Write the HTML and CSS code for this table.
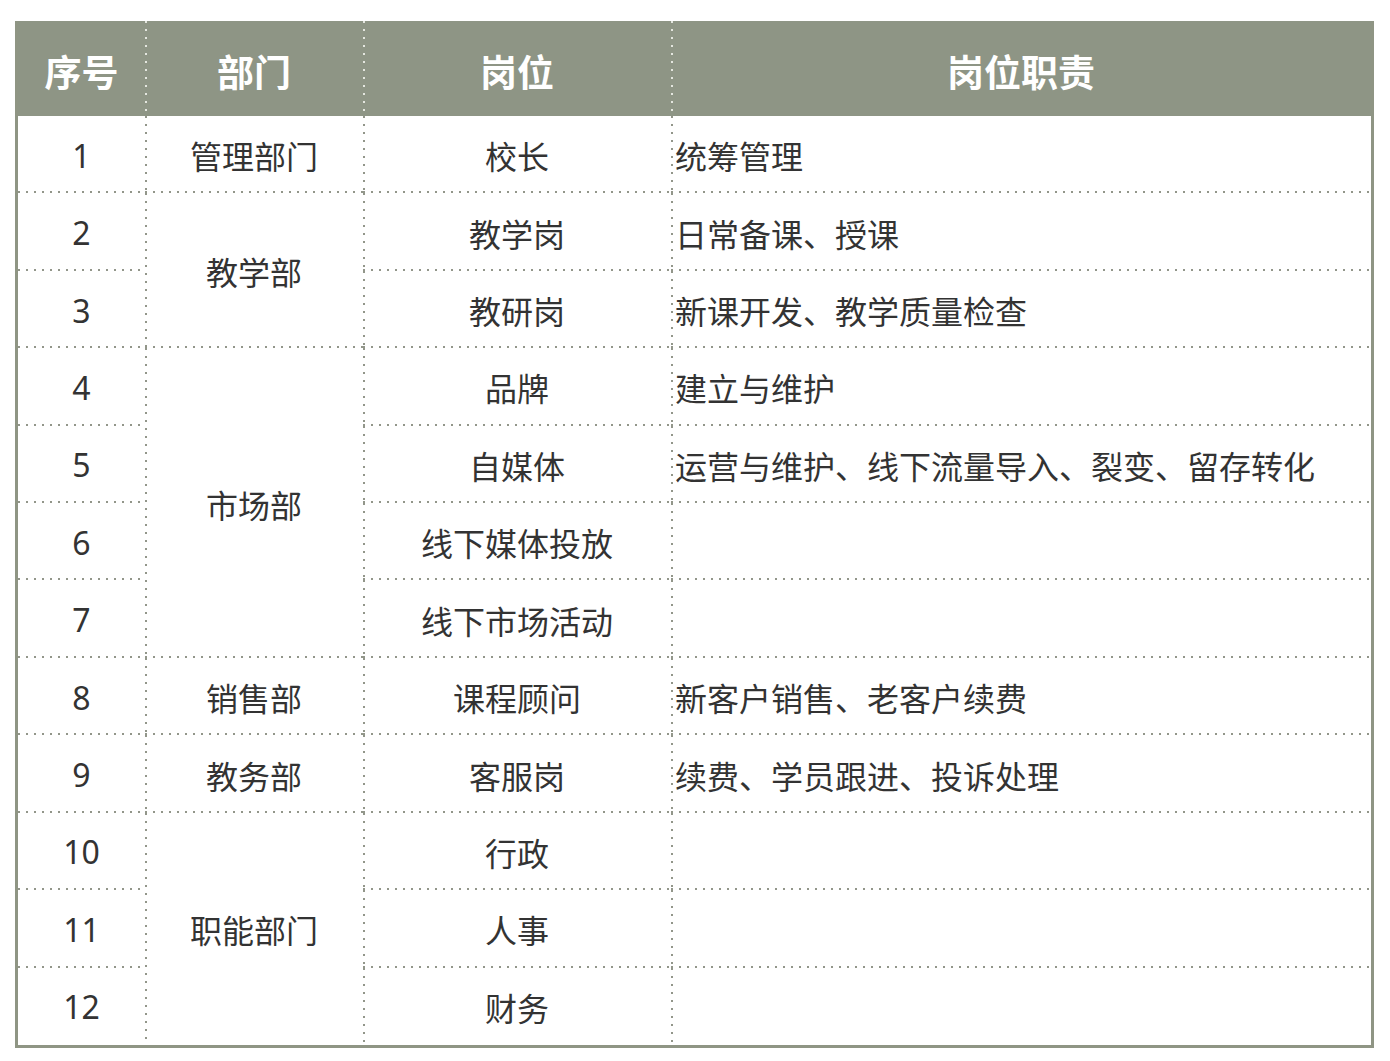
FILE: index.html
```html
<!DOCTYPE html>
<html lang="zh-CN">
<head>
<meta charset="utf-8">
<title>岗位职责</title>
<link rel="stylesheet" href="styles.css">
</head>
<body>
<div class="table">
  <div class="th first">序号</div>
  <div class="th">部门</div>
  <div class="th">岗位</div>
  <div class="th">岗位职责</div>

  <div class="td first">1</div>
  <div class="td">管理部门</div>
  <div class="td">校长</div>
  <div class="td duty">统筹管理</div>

  <div class="td first">2</div>
  <div class="td span2">教学部</div>
  <div class="td">教学岗</div>
  <div class="td duty">日常备课、授课</div>

  <div class="td first">3</div>
  <div class="td">教研岗</div>
  <div class="td duty">新课开发、教学质量检查</div>

  <div class="td first">4</div>
  <div class="td span4">市场部</div>
  <div class="td">品牌</div>
  <div class="td duty">建立与维护</div>

  <div class="td first">5</div>
  <div class="td">自媒体</div>
  <div class="td duty">运营与维护、线下流量导入、裂变、留存转化</div>

  <div class="td first">6</div>
  <div class="td">线下媒体投放</div>
  <div class="td duty"></div>

  <div class="td first">7</div>
  <div class="td">线下市场活动</div>
  <div class="td duty"></div>

  <div class="td first">8</div>
  <div class="td">销售部</div>
  <div class="td">课程顾问</div>
  <div class="td duty">新客户销售、老客户续费</div>

  <div class="td first">9</div>
  <div class="td">教务部</div>
  <div class="td">客服岗</div>
  <div class="td duty">续费、学员跟进、投诉处理</div>

  <div class="td first">10</div>
  <div class="td span3 last">职能部门</div>
  <div class="td">行政</div>
  <div class="td duty"></div>

  <div class="td first">11</div>
  <div class="td">人事</div>
  <div class="td duty"></div>

  <div class="td first last">12</div>
  <div class="td last">财务</div>
  <div class="td duty last"></div>
</div>
</body>
</html>
```
FILE: styles.css
```css
html, body {
  margin: 0;
  padding: 0;
  background: #ffffff;
}

body {
  font-family: "Noto Sans", "Noto Sans CJK SC", sans-serif;
  color: #333333;
}

.table {
  margin: 21px 0 0 15px;
  width: 1353px;
  border: 3px solid #8f9584;
  border-top: 0;
  display: grid;
  grid-template-columns: 127px 218px 308px 700px;
  grid-template-rows: 95px repeat(12, 1fr);
  height: 1024px;
}

.th {
  background-color: #8e9585;
  color: #ffffff;
  font-weight: 700;
  font-size: 37px;
  display: flex;
  align-items: center;
  justify-content: center;
  padding-top: 4px;
  background-image: linear-gradient(to bottom, #e4e6df 2px, transparent 2px);
  background-size: 2px 8px;
  background-repeat: repeat-y;
  background-position: left top;
}

.th.first {
  background-image: none;
}

.td {
  font-size: 32px;
  display: flex;
  align-items: center;
  justify-content: center;
  padding-top: 1px;
  box-sizing: border-box;
  background-image:
    linear-gradient(to right, #92968a 2px, transparent 2px),
    linear-gradient(to bottom, #92968a 2px, transparent 2px);
  background-size: 8px 2px, 2px 8px;
  background-repeat: repeat-x, repeat-y;
  background-position: left bottom, left top;
}

.td.first {
  background-image: linear-gradient(to right, #92968a 2px, transparent 2px);
  background-size: 8px 2px;
  background-repeat: repeat-x;
  background-position: left bottom;
}

.td.last {
  background-image: linear-gradient(to bottom, #92968a 2px, transparent 2px);
  background-size: 2px 8px;
  background-repeat: repeat-y;
  background-position: left top;
}

.td.first.last {
  background-image: none;
}

.td.duty {
  justify-content: flex-start;
  padding-left: 4px;
}

.span2 { grid-row: span 2; }
.span3 { grid-row: span 3; }
.span4 { grid-row: span 4; }
```
